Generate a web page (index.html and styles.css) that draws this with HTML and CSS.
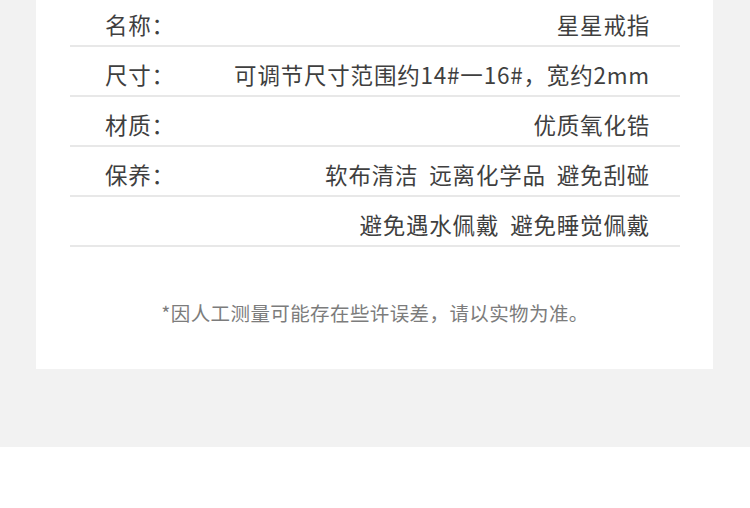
FILE: index.html
```html
<!DOCTYPE html>
<html lang="zh-CN">
<head>
    <meta charset="UTF-8">
    <title>星星戒指 - 商品参数</title>
    <link rel="stylesheet" href="styles.css">
</head>
<body>
<div class="page">
    <div class="card">
        <div class="spec-list">
            <div class="spec-row">
                <span class="spec-label">名称：</span>
                <span class="spec-value">星星戒指</span>
            </div>
            <div class="spec-row">
                <span class="spec-label">尺寸：</span>
                <span class="spec-value">可调节尺寸范围约14#一16#，宽约2mm</span>
            </div>
            <div class="spec-row">
                <span class="spec-label">材质：</span>
                <span class="spec-value">优质氧化锆</span>
            </div>
            <div class="spec-row">
                <span class="spec-label">保养：</span>
                <span class="spec-value">
                    <span>软布清洁</span><span>远离化学品</span><span>避免刮碰</span>
                </span>
            </div>
            <div class="spec-row">
                <span class="spec-label"></span>
                <span class="spec-value">
                    <span>避免遇水佩戴</span><span>避免睡觉佩戴</span>
                </span>
            </div>
        </div>
        <p class="note">*因人工测量可能存在些许误差，请以实物为准。</p>
    </div>
</div>
</body>
</html>
```

FILE: styles.css
```css
body {
    margin: 0;
    background: #fff;
    font-family: "Noto Sans CJK SC", "Noto Sans", sans-serif;
}
.page {
    background: #f2f2f2;
    padding: 0 37px 78px 36px;
}
.card {
    display: flex; flex-direction: column;
    background: #fff;
    padding: 0 33px 42px 34px;
}
.spec-list { margin-top: -3px; }
.spec-row {
    display: flex; align-items: center; justify-content: space-between;
    box-sizing: border-box;
    height: 50px;
    padding: 5px 30px 0 35px;
    border-bottom: 2px solid #e8e8e8;
    font-size: 22.5px; line-height: 30px;
    letter-spacing: 0.8px;
    color: #3f3f3f;
}
.spec-value { display: flex; gap: 11px; }
.note {
    margin: 52px 0 0;
    text-align: center;
    font-size: 19.5px; line-height: 28px;
    letter-spacing: 0.4px;
    color: #7c7c7c;
}
```
